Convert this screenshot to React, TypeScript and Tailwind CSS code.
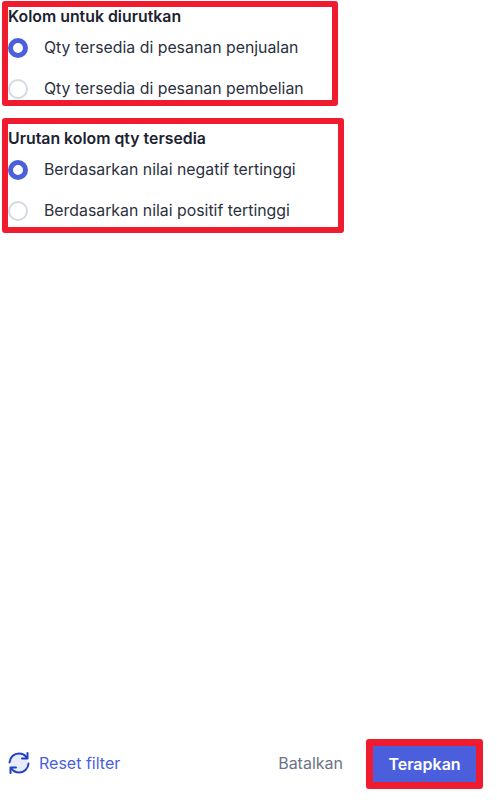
import React from "react";

interface Group {
  title: string;
  options: string[];
  className: string;
  titleClass: string;
}

const groups: Group[] = [
  {
    title: "Kolom untuk diurutkan",
    options: ["Qty tersedia di pesanan penjualan", "Qty tersedia di pesanan pembelian"],
    className: "w-[336px] h-[105px] mt-px",
    titleClass: "pt-px",
  },
  {
    title: "Urutan kolom qty tersedia",
    options: ["Berdasarkan nilai negatif tertinggi", "Berdasarkan nilai positif tertinggi"],
    className: "w-[342px] h-[115px] mt-3",
    titleClass: "pt-[6px]",
  },
];

const Radio: React.FC<{ checked: boolean }> = ({ checked }) => (
  <span
    className={
      checked
        ? "block w-5 h-5 rounded-full bg-white border-[5px] border-[#4b5fdc] shrink-0"
        : "block w-5 h-5 rounded-full bg-white border-2 border-[#d3d9e3] shrink-0"
    }
  />
);

const RefreshIcon = () => (
  <svg width="22" height="22" viewBox="0 0 22 22" fill="none" className="shrink-0">
    <circle cx="11" cy="11" r="8.5" fill="#e8ebfa" />
    <path
      d="M1.500 10.500C1.800 5.300 6 1.500 11 1.500c3.200 0 5.800 1.400 7.600 3.800M20.500 11.500c-.3 5.200-4.500 9-9.500 9-3.200 0-5.800-1.400-7.600-3.800"
      stroke="#1f3fc4"
      strokeWidth="2"
      strokeLinecap="round"
    />
    <path d="M19.500 1v5.500h-5.500M2.500 21v-5.500h5.500" stroke="#1f3fc4" strokeWidth="2" strokeLinecap="round" strokeLinejoin="round" />
  </svg>
);

export default function App() {
  return (
    <div className="w-[497px] h-[806px] bg-white flex flex-col justify-between overflow-hidden font-['Inter',sans-serif]">
      <div className="flex flex-col pl-0.5">
        {groups.map((group) => (
          <section
            key={group.title}
            className={`${group.className} border-[6px] border-[#ee1c2e] rounded-[3px] flex flex-col`}
          >
            <h2 className={`${group.titleClass} text-[15.85px] leading-[18px] font-semibold text-[#1c2230]`}>
              {group.title}
            </h2>
            <div className="flex flex-col gap-5 mt-[11px]">
              {group.options.map((option, i) => (
                <label key={option} className="flex items-center gap-4 h-[21px]">
                  <Radio checked={i === 0} />
                  <span className="text-[15.85px] leading-[21px] text-[#2b3140]">{option}</span>
                </label>
              ))}
            </div>
          </section>
        ))}
      </div>
      <div className="flex items-center justify-between pl-2 pr-3.5 pb-[17px]">
        <button className="flex items-center gap-[9px] pb-0.5 text-base text-[#4b5fdc]">
          <RefreshIcon />
          Reset filter
        </button>
        <div className="flex items-center gap-[23px]">
          <button className="pb-0.5 text-base text-[#6b7585]">Batalkan</button>
          <button className="w-[117px] h-[50px] border-[7px] border-[#ee1c2e] rounded-[3px] bg-[#4b5fdc] text-white text-base font-semibold">
            Terapkan
          </button>
        </div>
      </div>
    </div>
  );
}
